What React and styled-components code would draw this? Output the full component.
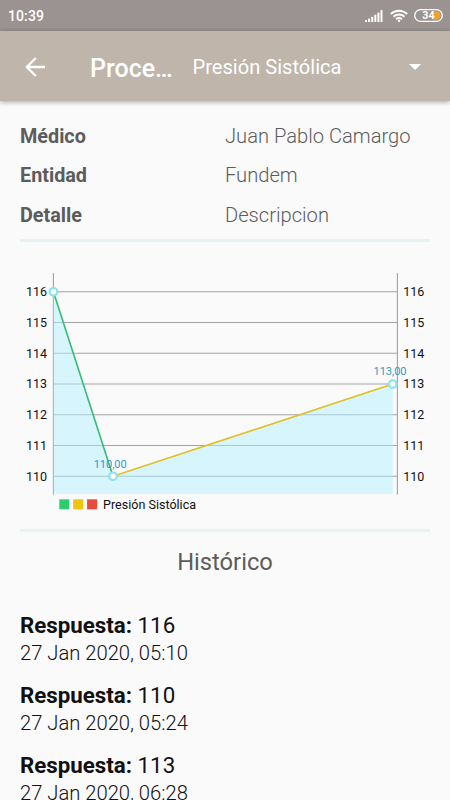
import React from "react";
import styled, { createGlobalStyle } from "styled-components";

const GlobalStyle = createGlobalStyle`
  * {
    box-sizing: border-box;
  }
  body {
    margin: 0;
    background: #fafafa;
    font-family: Roboto, "Liberation Sans", sans-serif;
  }
`;

const Screen = styled.div`
  display: flex;
  flex-direction: column;
  height: 800px;
  overflow: hidden;
  background: #fafafa;
`;

const StatusBar = styled.div`
  display: flex;
  flex: none;
  align-items: center;
  justify-content: space-between;
  height: 31px;
  padding: 1px 7px 0 8px;
  background: #9a9391;
  color: #fff;
`;

const Clock = styled.span`
  font-size: 14px;
  font-weight: 500;
  letter-spacing: 0.1px;
`;

const StatusIcons = styled.div`
  display: flex;
  align-items: center;
  gap: 6.5px;
  padding-bottom: 1px;
`;

const AppBar = styled.header`
  display: flex;
  flex: none;
  align-items: center;
  height: 70px;
  padding: 2px 25px 0;
  background: #bfb5ab;
  color: #fff;
  box-shadow: 0 1px 5px rgba(0, 0, 0, 0.35);
`;

const BackButton = styled.button`
  display: flex;
  width: 65px;
  padding: 0;
  border: none;
  background: none;
  color: inherit;
`;

const Title = styled.h1`
  width: 102.5px;
  margin: 2px 0 0;
  font-size: 25px;
  font-weight: 500;
  white-space: nowrap;
`;

const Picker = styled.div`
  display: flex;
  flex: 1;
  align-items: center;
  justify-content: space-between;
  font-size: 20.1px;
  padding-right: 4px;
`;

const Content = styled.main`
  padding: 16px 20px 0;
`;

const DetailRow = styled.div`
  display: grid;
  grid-template-columns: 1fr 1fr;
  height: 39.4px;
  line-height: 39.4px;
  color: #5c5c5c;
  font-size: 20.15px;
`;

const DetailLabel = styled.span`
  font-size: 19.8px;
  font-weight: 700;
`;

const DetailValue = styled.span`
  font-weight: 300;
`;

const Divider = styled.hr`
  height: 3px;
  margin: 0;
  border: none;
  background: #e8f1f4;
`;

const ChartBox = styled.div`
  height: 287px;

  svg {
    display: block;
  }
`;

const SectionTitle = styled.h2`
  margin: 13px 0 0;
  color: #5c5c5c;
  font-size: 23.7px;
  font-weight: 400;
  line-height: 34px;
  text-align: center;
`;

const HistoryList = styled.div`
  display: flex;
  flex-direction: column;
  gap: 14px;
  margin-top: 32px;
`;

const HistoryItem = styled.div`
  height: 56px;
  line-height: 28px;
  color: #111;
`;

const Answer = styled.div`
  font-size: 22.3px;
`;

const AnswerDate = styled.div`
  font-size: 20.2px;
  font-weight: 300;
`;

const details = [
  { label: "Médico", value: "Juan Pablo Camargo" },
  { label: "Entidad", value: "Fundem" },
  { label: "Detalle", value: "Descripcion" },
];

const history = [
  { value: 116, date: "27 Jan 2020, 05:10" },
  { value: 110, date: "27 Jan 2020, 05:24" },
  { value: 113, date: "27 Jan 2020, 06:28" },
];

const ticks = [116, 115, 114, 113, 112, 111, 110];
const legendColors = ["#2ecc71", "#f1c40f", "#e74c3c"];

// plot area inside the svg
const LEFT = 33.4;
const RIGHT = 377.4;
const TOP = 31;
const BOTTOM = 252;

const yOf = (value) => 49.8 + (116 - value) * 30.75;

const points = [
  { x: LEFT, y: yOf(116) },
  { x: 93, y: yOf(110), label: "110,00" },
  { x: 372.8, y: yOf(113), label: "113,00" },
];

const SignalIcon = () => (
  <svg width="18" height="12" viewBox="0 0 18 12" fill="#fff">
    {[2, 3.5, 5.2, 7.2, 9.4, 12].map((h, i) => (
      <rect key={i} x={i * 3.1} y={12 - h} width="2" height={h} rx="0.5" />
    ))}
  </svg>
);

const WifiIcon = () => (
  <svg width="18" height="13" viewBox="0 0 18 13" fill="none" stroke="#fff" strokeWidth="1.9">
    <path d="M0.8 5a11.8 11.8 0 0 1 16.4 0" />
    <path d="M3.5 7.7a7.9 7.9 0 0 1 11 0" />
    <path d="M6.1 10.2a4.2 4.2 0 0 1 5.8 0" />
    <circle cx="9" cy="11.8" r="1.2" fill="#fff" stroke="none" />
  </svg>
);

const BatteryIcon = () => (
  <svg width="29" height="13" viewBox="0 0 29 13">
    <path d="M19.5 2.3h2.8a4.2 4.2 0 0 1 0 8.4h-2.8z" fill="#f0a22e" />
    <rect x="0.7" y="0.7" width="27.6" height="11.6" rx="5.8" fill="none" stroke="#fff" strokeWidth="1.3" />
    <text x="14.5" y="10.3" fill="#fff" fontSize="10.8" fontWeight="700" textAnchor="middle">
      34
    </text>
  </svg>
);

const BackIcon = () => (
  <svg width="20" height="20" viewBox="0 0 20 20" fill="none" stroke="#fff" strokeWidth="2.3">
    <path d="M20 10H2M10.8 1L1.8 10l9 9" />
  </svg>
);

const Chart = () => {
  const line = points.map((p) => `${p.x},${p.y}`).join(" ");
  return (
    <svg width="410" height="287" viewBox="0 0 410 287">
      <g stroke="#a3a3a3" strokeWidth="1.1">
        {ticks.map((t) => (
          <line key={t} x1={LEFT} x2={RIGHT} y1={yOf(t)} y2={yOf(t)} />
        ))}
        <line x1={LEFT} x2={LEFT} y1={TOP} y2={BOTTOM + 0.7} />
        <line x1={RIGHT} x2={RIGHT} y1={TOP} y2={BOTTOM + 0.7} />
      </g>
      <polygon
        points={`${line} 372.8,${BOTTOM} ${LEFT},${BOTTOM}`}
        fill="#b1efff"
        fillOpacity="0.5"
      />
      <g strokeWidth="1.6">
        <line x1={points[0].x} y1={points[0].y} x2={points[1].x} y2={points[1].y} stroke="#34bd72" />
        <line x1={points[1].x} y1={points[1].y} x2={points[2].x} y2={points[2].y} stroke="#e2bf24" />
      </g>
      <g fontSize="12.5" fill="#111">
        {ticks.map((t) => (
          <React.Fragment key={t}>
            <text x="27" y={yOf(t) + 4.2} textAnchor="end">
              {t}
            </text>
            <text x="383.3" y={yOf(t) + 4.2}>
              {t}
            </text>
          </React.Fragment>
        ))}
      </g>
      {points.map((p) => (
        <React.Fragment key={p.x}>
          {p.label && (
            <text x={p.x - 2.8} y={p.y - 8.8} fontSize="11" fill="#3598c2" textAnchor="middle">
              {p.label}
            </text>
          )}
          <circle cx={p.x} cy={p.y} r="3.8" fill="#fff" stroke="#8ce3ee" strokeWidth="2.2" />
        </React.Fragment>
      ))}
      {legendColors.map((color, i) => (
        <rect key={color} x={39.3 + i * 13.9} y="257.3" width="10" height="10" fill={color} />
      ))}
      <text x="83" y="267.3" fontSize="12.55" fill="#111">
        Presión Sistólica
      </text>
    </svg>
  );
};

const App = () => {
  return (
    <Screen>
      <GlobalStyle />
      <StatusBar>
        <Clock>10:39</Clock>
        <StatusIcons>
          <SignalIcon />
          <WifiIcon />
          <BatteryIcon />
        </StatusIcons>
      </StatusBar>
      <AppBar>
        <BackButton aria-label="Back">
          <BackIcon />
        </BackButton>
        <Title>Proce…</Title>
        <Picker>
          <span>Presión Sistólica</span>
          <svg width="12" height="6" viewBox="0 0 12 6" fill="#fff">
            <path d="M0 0h12L6 6z" />
          </svg>
        </Picker>
      </AppBar>
      <Content>
        {details.map((d) => (
          <DetailRow key={d.label}>
            <DetailLabel>{d.label}</DetailLabel>
            <DetailValue>{d.value}</DetailValue>
          </DetailRow>
        ))}
        <ChartSection>
          <Divider />
          <ChartBox>
            <Chart />
          </ChartBox>
          <Divider />
        </ChartSection>
        <SectionTitle>Histórico</SectionTitle>
        <HistoryList>
          {history.map((h) => (
            <HistoryItem key={h.date}>
              <Answer>
                <b>Respuesta:</b> {h.value}
              </Answer>
              <AnswerDate>{h.date}</AnswerDate>
            </HistoryItem>
          ))}
        </HistoryList>
      </Content>
    </Screen>
  );
};

const ChartSection = styled.section`
  padding-top: 4px;
`;

export default App;
